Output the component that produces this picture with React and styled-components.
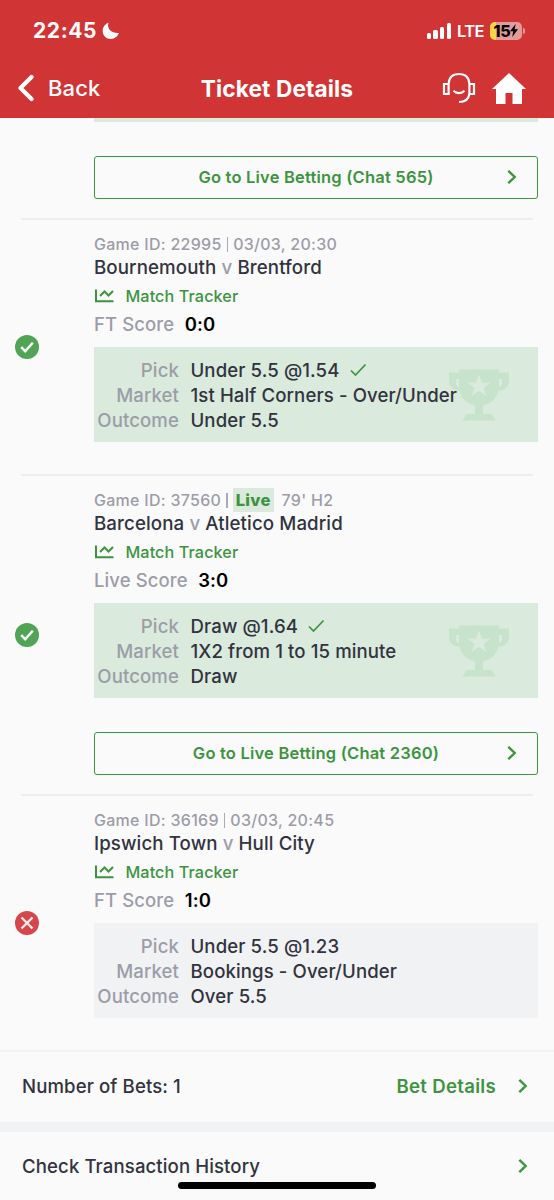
import React from "react";
import styled, { createGlobalStyle } from "styled-components";

const games = [
  {
    id: "22995",
    time: "03/03, 20:30",
    home: "Bournemouth",
    away: "Brentford",
    scoreLabel: "FT Score",
    score: "0:0",
    won: true,
    pick: "Under 5.5 @1.54",
    market: "1st Half Corners - Over/Under",
    outcome: "Under 5.5",
  },
  {
    id: "37560",
    live: "79' H2",
    home: "Barcelona",
    away: "Atletico Madrid",
    scoreLabel: "Live Score",
    score: "3:0",
    won: true,
    pick: "Draw @1.64",
    market: "1X2 from 1 to 15 minute",
    outcome: "Draw",
    chat: 2360,
  },
  {
    id: "36169",
    time: "03/03, 20:45",
    home: "Ipswich Town",
    away: "Hull City",
    scoreLabel: "FT Score",
    score: "1:0",
    won: false,
    pick: "Under 5.5 @1.23",
    market: "Bookings - Over/Under",
    outcome: "Over 5.5",
  },
];

const Chevron = () => (
  <svg width="10" height="16" viewBox="0 0 10 16" fill="none">
    <path d="M1.3 1.8L7.7 8l-6.4 6.2" stroke="#3c9440" strokeWidth="2.4" />
  </svg>
);

const Trophy = () => (
  <svg width="60" height="52" viewBox="0 0 60 52">
    <path
      fill="#c7e3cc"
      fillRule="evenodd"
      d="M10 0.6h40v3h10v8.500c0 5.500-4 9.400-10.500 9.600C47.800 29 42.500 34.500 34 36.300V45h8.500l4 6.500h-33l4-6.500H26v-8.700C17.500 34.500 12.200 29 10.500 21.700 4 21.500 0 17.600 0 12.100V3.600h10zM10 10H6.800v4c0 2.300 1.200 3.700 3.200 4.300zM50 10v8.300c2-.6 3.200-2 3.200-4.300v-4zM30 5.500l-2.900 8H18.200l7 5.200-2.600 8.300L30 22l7.400 5-2.600-8.300 7-5.200h-8.900z"
    />
  </svg>
);

const StatusIcon = ({ won }) => (
  <svg width="24" height="24" viewBox="0 0 24 24" fill="none">
    <circle cx="12" cy="12" r="12" fill={won ? "#51a456" : "#d6474b"} />
    {won ? (
      <path d="M6.200 12.200l4 4 7.600-8.400" stroke="#fff" strokeWidth="2.400" />
    ) : (
      <path d="M6.500 6.500l11 11M17.500 6.500l-11 11" stroke="#fbe9ea" strokeWidth="2.400" />
    )}
  </svg>
);

const Game = ({ game }) => (
  <>
    <Divider />
    <GameRow>
      <StatusCell>
        <StatusIcon won={game.won} />
      </StatusCell>
      <GameBody>
        <GameInfo>
          Game ID: {game.id} <Bar />
          {game.live ? (
            <>
              <LiveTag>Live</LiveTag>
              {game.live}
            </>
          ) : (
            game.time
          )}
        </GameInfo>
        <Teams>
          {game.home} <span>v</span> {game.away}
        </Teams>
        <Tracker>
          <svg width="19" height="14" viewBox="0 0 19 14" fill="none">
            <path d="M1 0.500v11.800h17.500M5 7l4.500-4.500 4 4L18 2" stroke="#3c9440" strokeWidth="2" />
          </svg>
          Match Tracker
        </Tracker>
        <Score>
          {game.scoreLabel} <b>{game.score}</b>
        </Score>
        <PickBox $won={game.won}>
          {game.won && (
            <TrophyMark>
              <Trophy />
            </TrophyMark>
          )}
          <PickLabel>Pick</PickLabel>
          <PickValue>
            {game.pick}
            {game.won && (
              <svg width="17" height="16" viewBox="0 0 17 16" fill="none">
                <path d="M1 7.500l4.500 4.500L15.500 1.500" stroke="#3c9440" strokeWidth="1.700" />
              </svg>
            )}
          </PickValue>
          <PickLabel>Market</PickLabel>
          <PickValue>{game.market}</PickValue>
          <PickLabel>Outcome</PickLabel>
          <PickValue>{game.outcome}</PickValue>
        </PickBox>
        {game.chat && <LiveBetting chat={game.chat} />}
      </GameBody>
    </GameRow>
  </>
);

const LiveBetting = ({ chat }) => (
  <LiveButton>
    <span>Go to Live Betting (Chat {chat})</span>
    <Chevron />
  </LiveButton>
);

const App = () => (
  <Page>
    <GlobalStyle />
    <Header>
      <StatusBar>
        <Clock>22:45</Clock>
        <svg width="18" height="18" viewBox="0 0 18 18">
          <path d="M6.500 0.800C4.900 5.200 7.800 11.500 16.900 11.100 15.500 14.800 12.500 17 8.800 17 4.200 17 0.700 13.500 0.700 9 0.700 5.300 3 2 6.500 0.800z" fill="#fff" />
        </svg>
        <Signal>
          <i />
          <i />
          <i />
          <i />
        </Signal>
        <Network>LTE</Network>
        <Battery>
          15
          <svg width="8" height="13" viewBox="0 0 8 13">
            <path d="M5.600 0L0 7.300h3.200L2.200 13 8 5.300H4.700z" fill="#000" />
          </svg>
        </Battery>
        <BatteryTip />
      </StatusBar>
      <NavBar>
        <BackButton>
          <svg width="17" height="28" viewBox="0 0 17 28" fill="none">
            <path d="M14.500 3L3.500 14l11 11" stroke="#fff" strokeWidth="4.200" strokeLinecap="round" strokeLinejoin="round" />
          </svg>
          Back
        </BackButton>
        <Title>Ticket Details</Title>
        <NavIcons>
          <svg width="34" height="32" viewBox="0 0 34 32" fill="none" stroke="#fff" strokeWidth="2.200">
            <path d="M2 12h4.600v10H2zM27.400 12H32v10h-4.600zM6.600 12C7 5.500 11 2 17 2s10 3.500 10.400 10M27.400 22c-.8 5-4.400 8-10.400 8M11.500 18.800c3 3 8 3 11 0" />
          </svg>
          <svg width="34" height="31" viewBox="0 0 34 31">
            <path d="M17 0l17 16h-4v15h-9.500V20h-7v11H4V16H0z" fill="#fff" />
          </svg>
        </NavIcons>
      </NavBar>
    </Header>
    <FirstGame>
      <PrevBox />
      <LiveBetting chat={565} />
    </FirstGame>
    {games.map((game) => (
      <Game key={game.id} game={game} />
    ))}
    <BetsRow>
      <span>Number of Bets: 1</span>
      <BetDetails>Bet Details</BetDetails>
      <Chevron />
    </BetsRow>
    <HistoryRow>
      <span>Check Transaction History</span>
      <Chevron />
    </HistoryRow>
    <HomeIndicator />
  </Page>
);

export default App;

const GlobalStyle = createGlobalStyle`
  * {
    box-sizing: border-box;
  }

  body {
    margin: 0;
    background: #fafafa;
    font-family: Inter, "Liberation Sans", sans-serif;
  }

  svg {
    display: block;
    flex-shrink: 0;
  }
`;

const Page = styled.div`
  position: relative;
  width: 554px;
  height: 1200px;
  overflow: hidden;
  background: #fafafa;
  color: #31333e;
  font-weight: 500;
  letter-spacing: 0.1px;
  white-space: nowrap;
`;

const Header = styled.header`
  height: 118px;
  background: #d13434;
  color: #fff;
`;

const StatusBar = styled.div`
  display: flex;
  align-items: center;
  height: 60px;
  padding: 1px 30px 0 33px;
`;

const Clock = styled.span`
  width: 69px;
  font-size: 21px;
  font-weight: 700;
  letter-spacing: 0.6px;
`;

const Signal = styled.div`
  display: flex;
  align-items: flex-end;
  gap: 2.300px;
  margin-left: auto;

  i {
    width: 4.400px;
    height: 6px;
    border-radius: 1.500px;
    background: #fff;
  }

  i:nth-child(2) {
    height: 9px;
  }

  i:nth-child(3) {
    height: 12px;
  }

  i:nth-child(4) {
    height: 16px;
  }
`;

const Network = styled.span`
  width: 33px;
  margin-left: 6px;
  font-size: 16.500px;
  font-weight: 600;
  letter-spacing: -0.6px;
`;

const Battery = styled.div`
  display: flex;
  align-items: center;
  justify-content: center;
  width: 32px;
  height: 18px;
  border-radius: 5px;
  background: linear-gradient(90deg, #fbd549 6px, #e39a9a 6px);
  color: #000;
  font-size: 16px;
  font-weight: 800;
  letter-spacing: -0.3px;
`;

const BatteryTip = styled.div`
  width: 2px;
  height: 6px;
  margin-left: 1px;
  margin-right: -1px;
  border-radius: 0 2px 2px 0;
  background: #e39a9a;
`;

const NavBar = styled.nav`
  display: grid;
  grid-template-columns: 1fr auto 1fr;
  align-items: center;
  height: 56px;
  padding: 0 28px;
`;

const BackButton = styled.div`
  display: flex;
  align-items: center;
  gap: 14px;
  margin-left: -11px;
  font-size: 22px;
`;

const Title = styled.h1`
  margin: 0;
  font-size: 22.700px;
  font-weight: 700;
`;

const NavIcons = styled.div`
  display: flex;
  align-items: center;
  justify-content: flex-end;
  gap: 16px;
`;

const FirstGame = styled.div`
  height: 100px;
  padding: 0 16px 0 94px;
`;

const PrevBox = styled.div`
  height: 4px;
  background: #daeadc;
`;

const Divider = styled.div`
  height: 2px;
  margin: 0 21px;
  background: #eceef2;
`;

const GameRow = styled.section`
  display: flex;
  padding-right: 16px;
`;

const StatusCell = styled.div`
  display: flex;
  align-items: center;
  width: 94px;
  padding-left: 15px;
`;

const GameBody = styled.div`
  flex: 1;
  padding: 12px 0 19px;
`;

const GameInfo = styled.div`
  display: flex;
  align-items: center;
  height: 24px;
  color: #9c9da8;
  font-size: 16px;
  letter-spacing: 0.28px;
`;

const Bar = styled.i`
  width: 1.500px;
  height: 15px;
  margin: 0 5px;
  background: #a9aab3;
`;

const LiveTag = styled.b`
  display: flex;
  align-items: center;
  height: 24px;
  margin-right: 8px;
  padding: 0 3px;
  background: #daeadc;
  color: #3c9440;
  font-size: 16.500px;
  font-weight: 800;
`;

const Teams = styled.div`
  height: 24px;
  font-size: 18.700px;
  line-height: 24px;

  span {
    color: #9c9da8;
  }
`;

const Tracker = styled.div`
  display: flex;
  align-items: center;
  gap: 11.500px;
  height: 32px;
  padding-left: 1px;
  color: #3c9440;
  font-size: 16.200px;
`;

const Score = styled.div`
  height: 24px;
  color: #9c9da8;
  font-size: 18.500px;
  line-height: 25px;

  b {
    margin-left: 5.500px;
    color: #000;
    font-weight: 600;
  }
`;

const PickBox = styled.div`
  position: relative;
  display: grid;
  grid-template-columns: 85px 1fr;
  grid-auto-rows: 25px;
  column-gap: 11.500px;
  height: 95px;
  margin: 11px 0 13px;
  padding-top: 11px;
  background: ${(props) => (props.$won ? "#daeadc" : "#f1f2f4")};
  font-size: 18.600px;
  line-height: 25px;
`;

const TrophyMark = styled.div`
  position: absolute;
  top: 22px;
  right: 29px;
`;

const PickLabel = styled.span`
  color: #9c9da8;
  text-align: right;
`;

const PickValue = styled.span`
  position: relative;
  display: flex;
  align-items: center;
  gap: 10px;
`;

const LiveButton = styled.div`
  display: flex;
  align-items: center;
  height: 43px;
  margin-top: 34px;
  padding: 0 20px 1px 30px;
  border: 1.500px solid #3c9440;
  border-radius: 3px;
  color: #3c9440;
  font-size: 16.500px;
  font-weight: 600;
  letter-spacing: 0.2px;

  span {
    flex: 1;
    text-align: center;
  }
`;

const BetsRow = styled.div`
  display: flex;
  align-items: center;
  height: 72px;
  padding: 0 26px 2px 22px;
  border-top: 2px solid #f1f2f4;
  font-size: 18.600px;

  span {
    flex: 1;
  }
`;

const BetDetails = styled.b`
  margin-right: 22px;
  color: #3c9440;
  font-weight: 600;
  letter-spacing: 0.3px;
`;

const HistoryRow = styled(BetsRow)`
  height: 80px;
  border-top: 10px solid #f1f2f4;
`;

const HomeIndicator = styled.div`
  position: absolute;
  bottom: 11px;
  left: 178px;
  width: 198px;
  height: 7px;
  border-radius: 4px;
  background: #000;
`;
